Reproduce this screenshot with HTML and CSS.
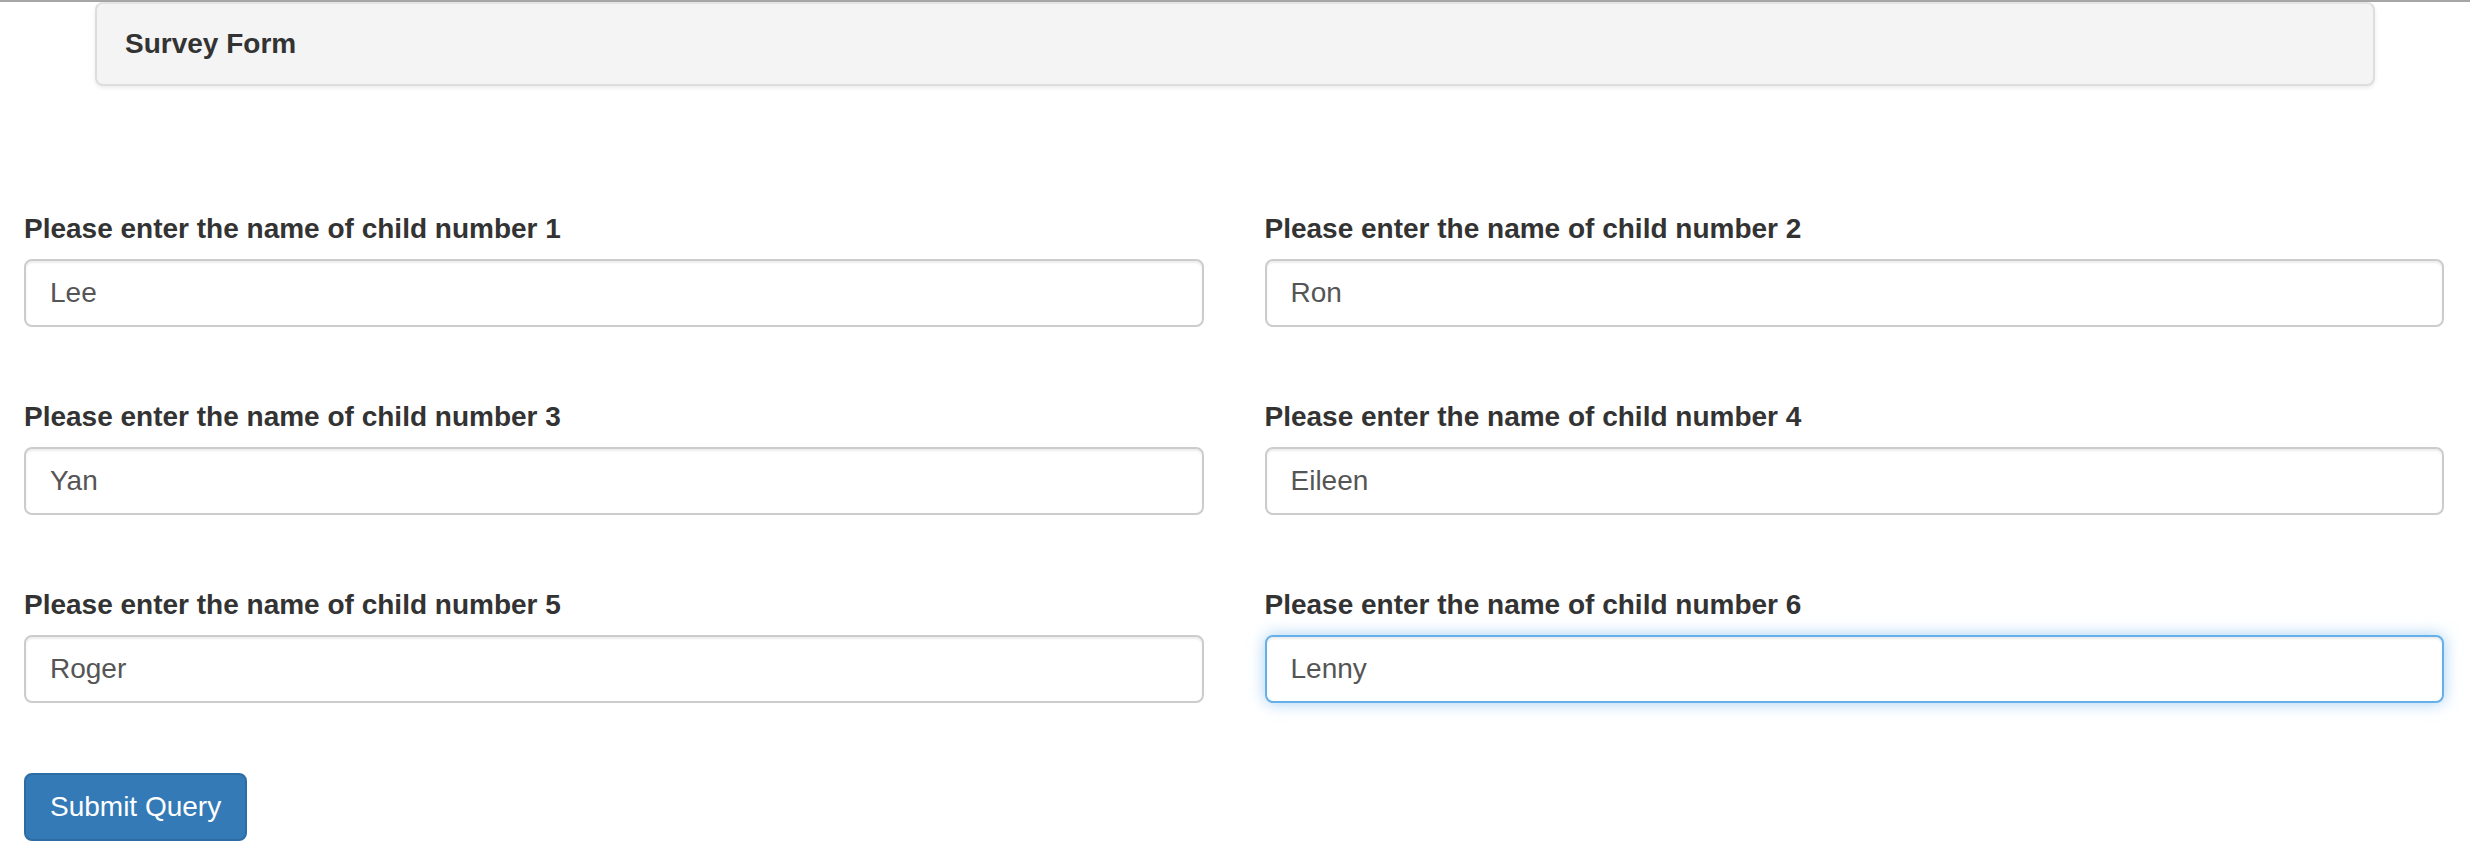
FILE: index.html
```html
<!DOCTYPE html>
<html lang="en">
<head>
<meta charset="utf-8">
<title>Survey Form</title>
<link rel="stylesheet" href="styles.css">
</head>
<body>
<div class="page">
  <div class="panel">
    <h3 class="panel-title">Survey Form</h3>
  </div>
  <form class="survey">
    <div class="fields">
      <div class="form-group">
        <label class="field-label" for="c1">Please enter the name of child number 1</label>
        <input class="form-control" id="c1" type="text" value="Lee">
      </div>
      <div class="form-group">
        <label class="field-label" for="c2">Please enter the name of child number 2</label>
        <input class="form-control" id="c2" type="text" value="Ron">
      </div>
      <div class="form-group">
        <label class="field-label" for="c3">Please enter the name of child number 3</label>
        <input class="form-control" id="c3" type="text" value="Yan">
      </div>
      <div class="form-group">
        <label class="field-label" for="c4">Please enter the name of child number 4</label>
        <input class="form-control" id="c4" type="text" value="Eileen">
      </div>
      <div class="form-group">
        <label class="field-label" for="c5">Please enter the name of child number 5</label>
        <input class="form-control" id="c5" type="text" value="Roger">
      </div>
      <div class="form-group">
        <label class="field-label" for="c6">Please enter the name of child number 6</label>
        <input class="form-control is-focused" id="c6" type="text" value="Lenny">
      </div>
    </div>
    <div class="actions">
      <button class="btn-primary" type="submit">Submit Query</button>
    </div>
  </form>
</div>
</body>
</html>
```
FILE: styles.css
```css
* {
  box-sizing: border-box;
}

html, body {
  margin: 0;
  padding: 0;
  background: #ffffff;
}

body {
  border-top: 2px solid #a6a6a6;
  font-family: "Liberation Sans", Arial, Helvetica, sans-serif;
  font-size: 28px;
  line-height: 40px;
  color: #333333;
}

.page {
  display: flex;
  flex-direction: column;
}

.panel {
  margin: 0 95px;
  background: #f4f4f4;
  border: 2px solid #dddddd;
  border-top-color: #e4e4e4;
  border-radius: 8px;
  box-shadow: 0 2px 4px rgba(0, 0, 0, 0.08);
  padding: 20px 28px;
}

.panel-title {
  margin: 0;
  font-size: 28px;
  line-height: 40px;
  font-weight: bold;
  color: #333333;
}

.survey {
  padding: 123px 26px 0 24px;
}

.fields {
  display: grid;
  grid-template-columns: 1fr 1fr;
  column-gap: 61px;
  row-gap: 70px;
}

.form-group {
  display: flex;
  flex-direction: column;
}

.field-label {
  font-weight: bold;
  margin-bottom: 10px;
  color: #333333;
}

.form-control {
  display: block;
  width: 100%;
  height: 68px;
  padding: 12px 24px;
  font-family: inherit;
  font-size: 28px;
  line-height: 40px;
  color: #555555;
  background: #ffffff;
  border: 2px solid #cccccc;
  border-radius: 8px;
  box-shadow: inset 0 2px 2px rgba(0, 0, 0, 0.075);
  outline: none;
}

.form-control.is-focused {
  border-color: #66afe9;
  box-shadow: inset 0 2px 2px rgba(0, 0, 0, 0.075), 0 0 16px rgba(102, 175, 233, 0.6);
}

.actions {
  margin-top: 70px;
  display: flex;
}

.btn-primary {
  font-family: inherit;
  font-size: 28px;
  line-height: 40px;
  font-weight: normal;
  color: #ffffff;
  background: #337ab7;
  border: 2px solid #2e6da4;
  border-radius: 8px;
  padding: 12px 24px;
  cursor: pointer;
}
```
